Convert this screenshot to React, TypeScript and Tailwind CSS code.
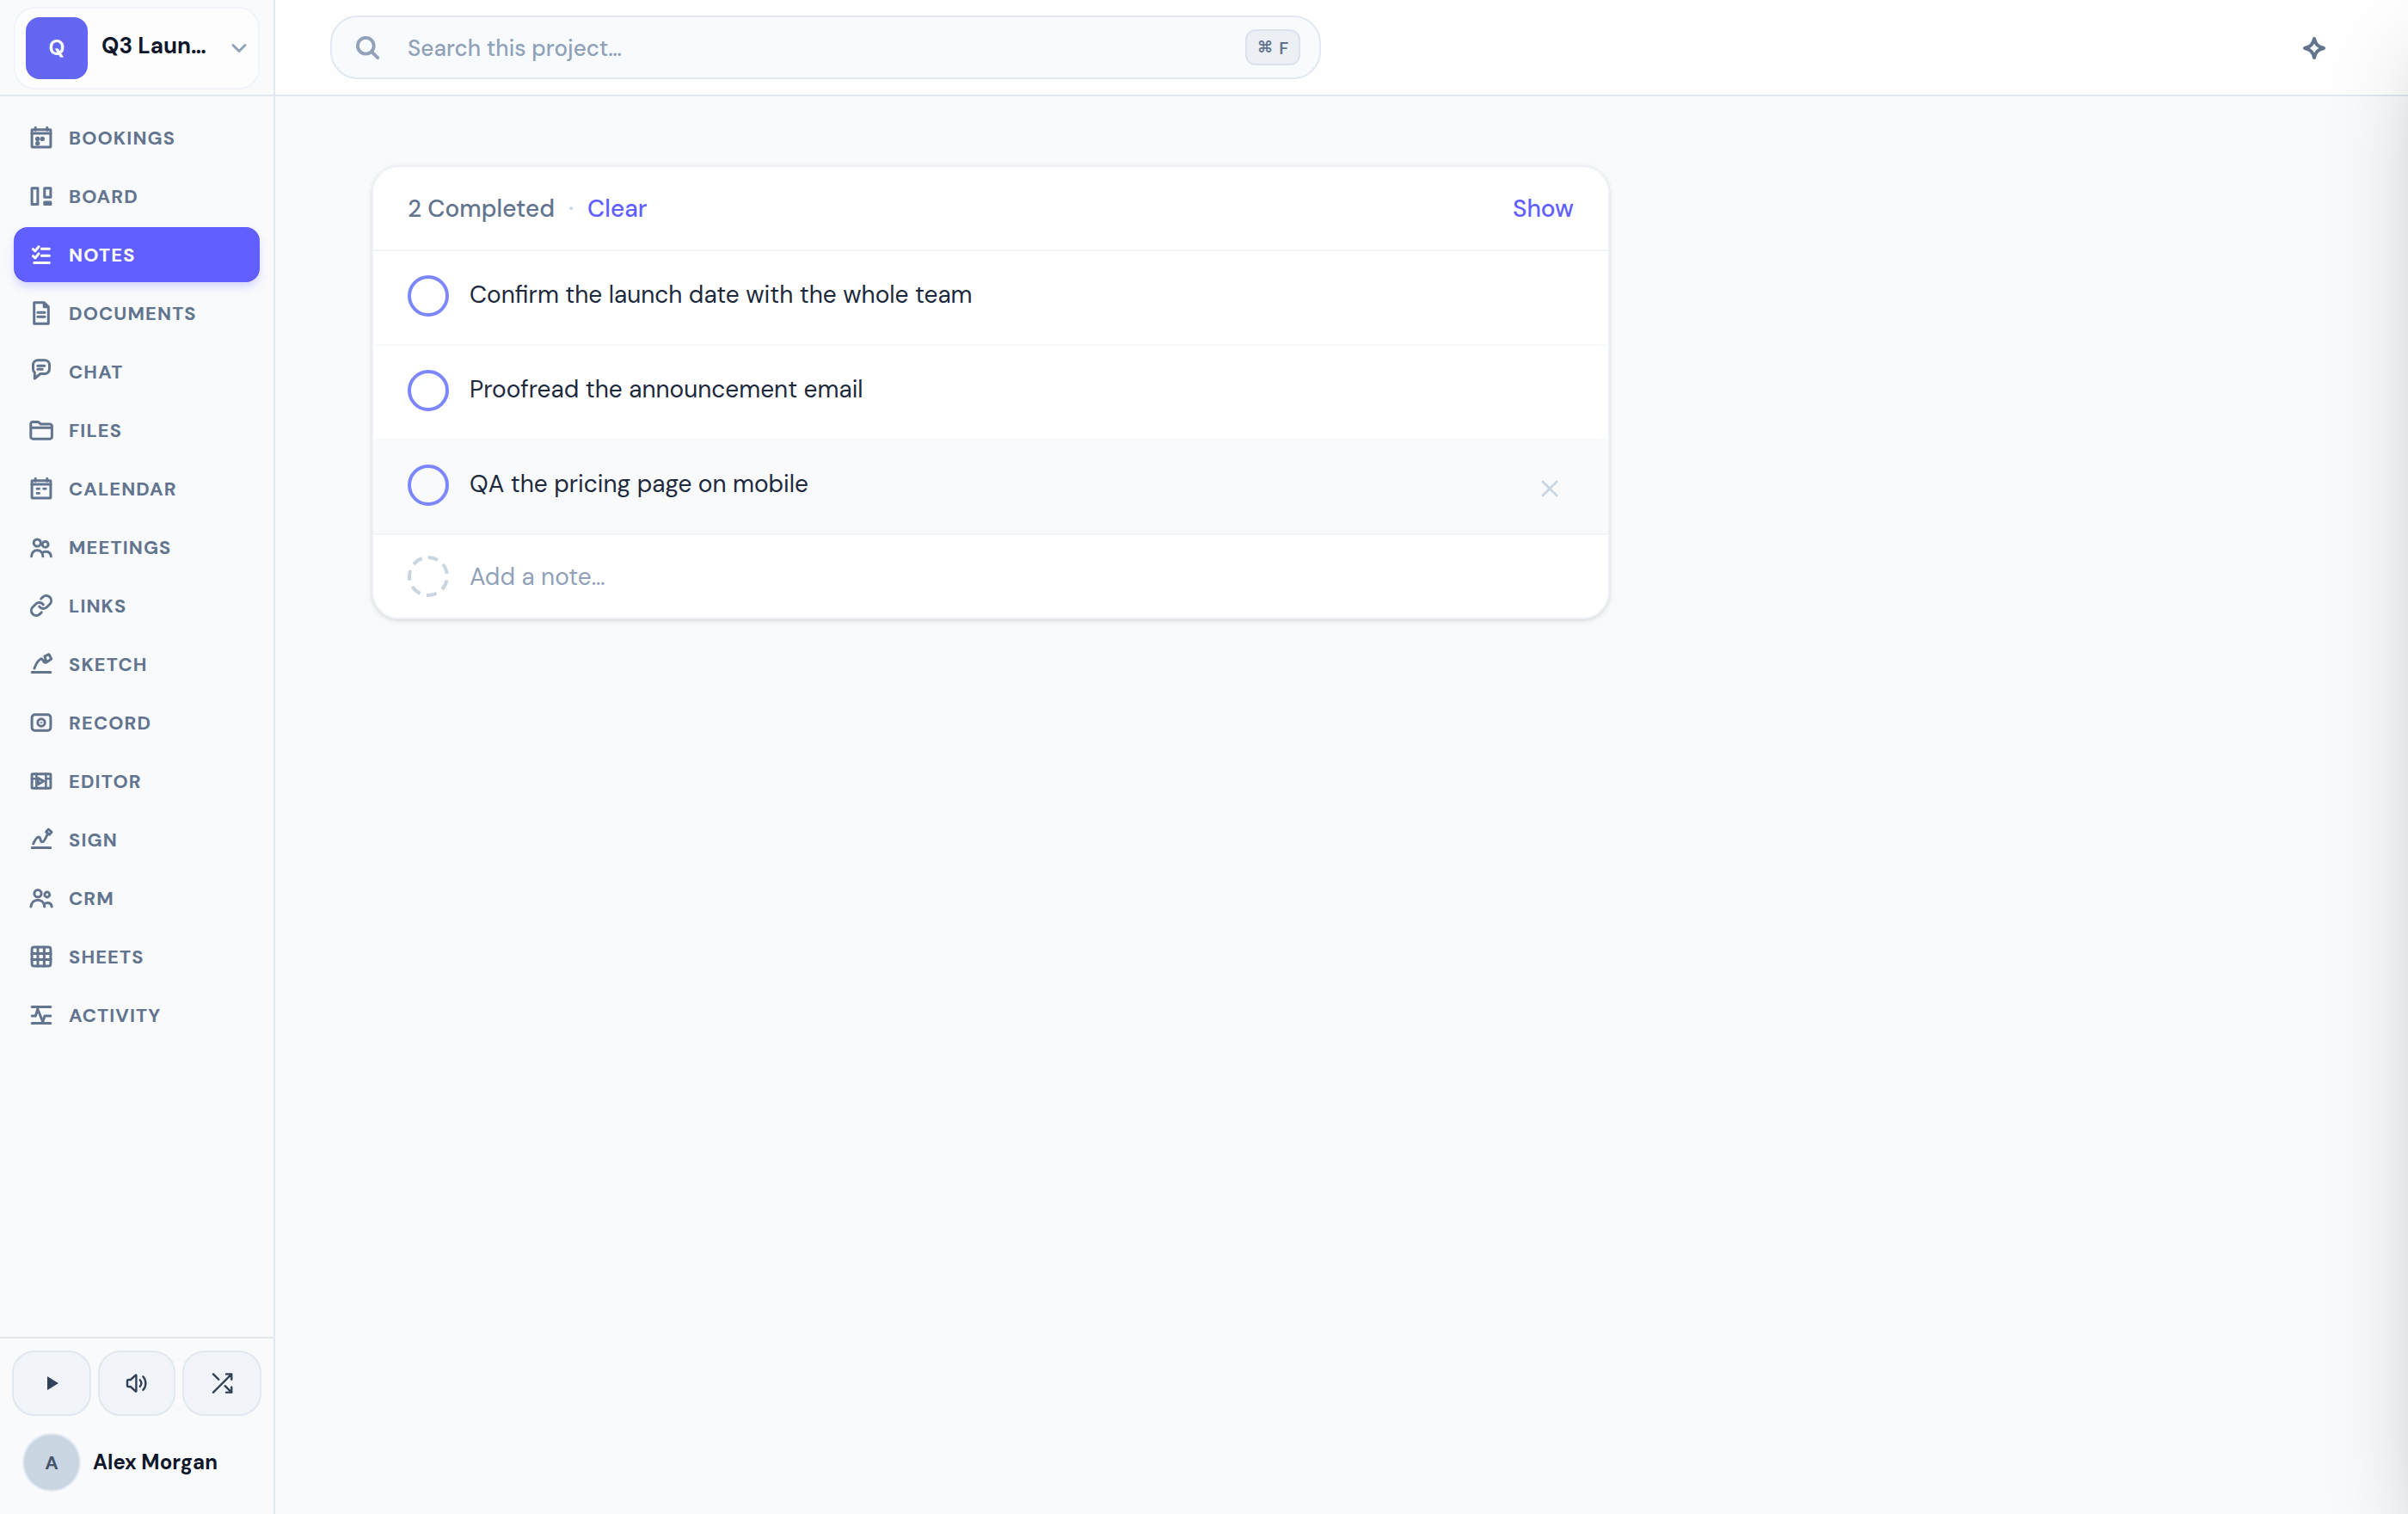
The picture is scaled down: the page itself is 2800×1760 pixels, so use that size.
import React from "react";
import { ChevronDown, Link, X } from "lucide-react";

function Glyph({ children }: { children: React.ReactNode }) {
  return (
    <svg
      className="size-7 shrink-0 overflow-visible"
      viewBox="0 0 28 28"
      fill="none"
      stroke="currentColor"
      strokeWidth="3"
      strokeLinecap="round"
      strokeLinejoin="round"
    >
      {children}
    </svg>
  );
}

const calendarFrame = (
  <>
    <rect x="3.1" y="4.7" width="21.8" height="20.4" rx="0.6" />
    <path d="M3 9h22M7.2 2.2v3M20.8 2.2v3" />
  </>
);

const items: { label: string; icon: React.ReactNode }[] = [
  {
    label: "BOOKINGS",
    icon: (
      <Glyph>
        {calendarFrame}
        <g fill="currentColor" stroke="none">
          <circle cx="9.7" cy="15.4" r="2.7" />
          <circle cx="15.3" cy="15.4" r="2.7" />
          <circle cx="9.7" cy="20.6" r="2.7" />
        </g>
      </Glyph>
    ),
  },
  {
    label: "BOARD",
    icon: (
      <Glyph>
        <rect x="3.1" y="4.7" width="6.8" height="18.8" />
        <rect x="17.8" y="4.7" width="7.1" height="10.6" />
        <rect x="17.8" y="21.1" width="7.1" height="2.4" />
      </Glyph>
    ),
  },
  {
    label: "NOTES",
    icon: (
      <Glyph>
        <path d="M14.3 7.3h9.1M14.3 15.3h9.1M5.7 23.4h17.7M4.4 7.6l2.5 2.3 4.2-5.1M4.4 15.7l2.5 2.3 4.2-5.1" />
      </Glyph>
    ),
  },
  {
    label: "DOCUMENTS",
    icon: (
      <Glyph>
        <path d="M5.7 1.8h11.8l4.8 4.8v19.6H5.7zM17.2 2v4.8h5M9.8 13.2h8.2M9.8 18.2h8.2" />
      </Glyph>
    ),
  },
  {
    label: "CHAT",
    icon: (
      <Glyph>
        <path d="M10 .7h8a5.5 5.5 0 0 1 5.5 5.5V11a5.5 5.5 0 0 1-5.5 5.5h-5L6.3 22v-7A5.5 5.5 0 0 1 4.5 11V6.2A5.5 5.5 0 0 1 10 .7zM9.8 7.3h8M9.8 11.3h5.5" />
      </Glyph>
    ),
  },
  {
    label: "FILES",
    icon: (
      <Glyph>
        <path d="M1.8 11.3V6.6a2.2 2.2 0 0 1 2.2-2.2h6.2l3.2 2.6h10.6a2.4 2.4 0 0 1 2.4 2.4v12.4a2.4 2.4 0 0 1-2.4 2.4H4.2a2.4 2.4 0 0 1-2.4-2.4zM1.8 11.3h24.6" />
      </Glyph>
    ),
  },
  {
    label: "CALENDAR",
    icon: (
      <Glyph>
        {calendarFrame}
        <path strokeWidth="2.7" d="M9 14.2h2.6M16.6 14.2h2.6M9 19.4h2.6" />
      </Glyph>
    ),
  },
  {
    label: "MEETINGS",
    icon: (
      <Glyph>
        <circle cx="9.3" cy="9" r="4.1" />
        <circle cx="18.7" cy="10.9" r="3.4" />
        <path d="M2.6 24.8c.2-4.6 3-7.1 6.7-7.1s6.5 2.6 6.6 7.1M15 21c1.3-1.4 3-2 4.8-1.8 3.3.2 5.3 2.4 5.5 5.6" />
      </Glyph>
    ),
  },
  {
    label: "LINKS",
    icon: <Link className="size-7 shrink-0" strokeWidth={2.6} />,
  },
  {
    label: "SKETCH",
    icon: (
      <Glyph>
        <path d="M3.2 23.4h21.6M6 19c1.6-4.6 4.2-9.4 7.5-11 2.6-1 2.2 3.8 5 4.3M18 4.9l5-2.2 2.7 5.3-5.8 4z" />
      </Glyph>
    ),
  },
  {
    label: "RECORD",
    icon: (
      <Glyph>
        <rect x="3.1" y="4.7" width="21.8" height="18.6" rx="3.5" />
        <circle cx="14" cy="14" r="4.2" />
        <circle cx="14" cy="14" r="1.1" fill="currentColor" stroke="none" />
      </Glyph>
    ),
  },
  {
    label: "EDITOR",
    icon: (
      <Glyph>
        <rect x="3.1" y="5.7" width="21.8" height="16.6" rx="0.5" />
        <path strokeWidth="2.6" d="M8.4 5.6v16.8M19.4 5.6v16.8M3 11.3h5.4M19.4 11.3H25" />
        <path d="M10.4 10.6v7l6.4-3.6z" />
      </Glyph>
    ),
  },
  {
    label: "SIGN",
    icon: (
      <Glyph>
        <path d="M3.2 23.4h21.6M4.7 18.8c1.6-3.6 4.2-8 6.5-7.8 2.6.4 1.2 6 4 5.8 2.2-.2 4-4.6 5.8-8.6M22.4 2.1l3.6 3.1-2.6 3-3.8-3.1z" />
      </Glyph>
    ),
  },
  {
    label: "CRM",
    icon: (
      <Glyph>
        <circle cx="10" cy="8.7" r="4.1" />
        <circle cx="20.8" cy="10" r="2.9" />
        <path d="M2 24c.4-4.8 3.6-7.8 8-7.8s7.4 3 7.8 7.8M17.6 20.8c3.4-2.6 8.2-1.4 8.6 3.2" />
      </Glyph>
    ),
  },
  {
    label: "SHEETS",
    icon: (
      <Glyph>
        <rect x="3.1" y="3.1" width="21.8" height="21.8" rx="2.4" />
        <path d="M10 3v22M17.4 3v22M3 10.4h22M3 17.6h22" />
      </Glyph>
    ),
  },
  {
    label: "ACTIVITY",
    icon: (
      <Glyph>
        <path d="M3.2 4.4h21.6M3.2 23.4h21.6M3.2 15h4.2l2.4-8 6 15 2.2-7h6.8" />
      </Glyph>
    ),
  },
];

const mediaButton =
  "flex h-[76px] items-center justify-center rounded-[26px] border-2 border-slate-200 bg-slate-100 text-slate-700";

function Sidebar() {
  return (
    <aside className="flex h-full w-80 shrink-0 flex-col border-r-2 border-slate-200 bg-slate-50">
      <div className="h-28 shrink-0 border-b-2 border-slate-200 px-4 py-2">
        <button className="flex h-24 w-full items-center rounded-3xl border-2 border-slate-100 bg-[#fdfdfe] pr-2 pl-3 text-left">
          <span className="flex size-[72px] shrink-0 items-center justify-center rounded-2xl bg-[#6366f1] text-[24px] font-bold text-white">
            Q
          </span>
          <span className="ml-4 w-[140px] pb-1.5 text-[26px] font-bold whitespace-nowrap text-slate-900">
            Q3 Laun…
          </span>
          <ChevronDown className="ml-auto size-7 shrink-0 text-slate-400" strokeWidth={2.5} />
        </button>
      </div>
      <nav className="flex flex-1 flex-col gap-1 px-4 pt-4">
        {items.map((item) => (
          <a
            key={item.label}
            className={
              item.label === "NOTES"
                ? "flex h-16 items-center gap-[18px] rounded-2xl bg-[#615fff] px-[18px] text-white shadow-[0_6px_12px_-2px_rgba(97,95,255,0.28)]"
                : "flex h-16 items-center gap-[18px] rounded-2xl px-[18px] text-slate-500"
            }
          >
            {item.icon}
            <span className="pt-px text-[22px] font-bold tracking-[1.1px]">{item.label}</span>
          </a>
        ))}
      </nav>
      <div className="flex h-[206px] shrink-0 flex-col border-t-2 border-slate-200 px-3.5 pt-3.5">
        <div className="grid grid-cols-[92px_90px_92px] gap-2">
          <button className={mediaButton}>
            <svg className="ml-0.5 h-4 w-[13px]" viewBox="0 0 13 16" fill="currentColor">
              <path d="M0 0l13 8-13 8z" />
            </svg>
          </button>
          <button className={mediaButton}>
            <svg
              className="size-7"
              viewBox="0 0 28 28"
              fill="none"
              stroke="currentColor"
              strokeWidth="2.4"
              strokeLinecap="round"
              strokeLinejoin="round"
            >
              <path d="M13.4 4.8v18.4a.4.4 0 0 1-.7.2L6.8 18H4.2A1.2 1.2 0 0 1 3 16.8v-5.6A1.2 1.2 0 0 1 4.2 10h2.6l5.9-5.4a.4.4 0 0 1 .7.2zM17.8 10.2c1.8 2.2 1.8 5.4 0 7.6M21.4 6.2c4 4.4 4 11.2 0 15.6" />
            </svg>
          </button>
          <button className={mediaButton}>
            <svg
              className="size-[30px]"
              viewBox="0 0 24 24"
              fill="none"
              stroke="currentColor"
              strokeWidth="1.9"
              strokeLinecap="round"
              strokeLinejoin="round"
            >
              <path d="M16 3.5h5v5M4 20.5l17-17M21 15.5v5h-5M15 14.5l6 6M4 3.5l5 5" />
            </svg>
          </button>
        </div>
        <div className="mt-5 flex items-center gap-3.5 pl-3">
          <span className="flex size-[68px] items-center justify-center rounded-full border-2 border-slate-200 bg-slate-300 text-[22px] font-bold text-slate-600">
            A
          </span>
          <span className="text-[24px] font-bold whitespace-nowrap text-slate-900">Alex Morgan</span>
        </div>
      </div>
    </aside>
  );
}

function TopBar() {
  return (
    <header className="flex h-28 shrink-0 items-center justify-between border-b-2 border-slate-200 bg-[#fefefe] pr-[92px] pl-16">
      <div className="flex h-[74px] w-[1152px] items-center rounded-[32px] border-2 border-slate-200 bg-[#f8fbfd] pr-[22px] pl-[26px]">
        <svg
          className="size-8 shrink-0 text-slate-400"
          viewBox="0 0 32 32"
          fill="none"
          stroke="currentColor"
          strokeWidth="3.8"
          strokeLinecap="round"
        >
          <circle cx="13.3" cy="14.3" r="9.4" />
          <path d="M20.3 21.3l6.9 6.9" />
        </svg>
        <span className="ml-[30px] flex-1 pt-0.5 text-[26px] font-medium tracking-[0.05px] text-slate-400">
          Search this project…
        </span>
        <kbd className="flex h-[42px] w-16 items-center justify-center gap-[7px] rounded-xl border-2 border-[#dce3ec] bg-[#eceff4] pt-px font-['DM_Sans','Inter',sans-serif] text-[20px] font-semibold text-slate-500">
          <span className="text-[19px]">⌘</span>
          <span>F</span>
        </kbd>
      </div>
      <svg
        className="mt-0.5 size-[34px] text-slate-500"
        viewBox="0 0 34 34"
        fill="none"
        stroke="currentColor"
        strokeWidth="4"
        strokeLinejoin="round"
      >
        <path d="M17 6c1.6 6.8 4.2 9.4 11 11-6.8 1.6-9.4 4.2-11 11-1.6-6.8-4.2-9.4-11-11 6.8-1.6 9.4-4.2 11-11z" />
      </svg>
    </header>
  );
}

const notes = [
  { text: "Confirm the launch date with the whole team", hovered: false },
  { text: "Proofread the announcement email", hovered: false },
  { text: "QA the pricing page on mobile", hovered: true },
];

function NotesCard() {
  return (
    <section className="w-[1440px] overflow-hidden rounded-[32px] border-2 border-[#edf1f6] bg-white text-[28px] shadow-[0_2px_6px_rgba(0,0,0,0.10),0_2px_4px_-2px_rgba(0,0,0,0.10)]">
      <div className="flex h-[98px] items-center border-b-2 border-slate-100 px-10 pt-px font-medium">
        <span className="text-slate-500">2 Completed</span>
        <span className="mx-4 text-slate-300">·</span>
        <span className="flex-1 text-[#615fff]">Clear</span>
        <span className="text-[#615fff]">Show</span>
      </div>
      {notes.map((note) => (
        <div
          key={note.text}
          className={
            note.hovered
              ? "flex h-[108px] items-start bg-slate-50 px-10 pt-7"
              : "flex h-[110px] items-start border-b-2 border-slate-50 px-10 pt-7"
          }
        >
          <span className="size-12 shrink-0 rounded-full border-4 border-[#7c86ff]" />
          <span className="ml-6 flex-1 leading-[46px] text-slate-800">{note.text}</span>
          {note.hovered && (
            <X className="mt-3 mr-3 size-8 shrink-0 text-slate-300" strokeWidth={2} />
          )}
        </div>
      ))}
      <div className="flex h-[98px] items-center border-t-2 border-slate-100 px-10">
        <svg className="size-12 shrink-0 -rotate-90 text-slate-300" viewBox="0 0 48 48" fill="none">
          <circle
            cx="24"
            cy="24"
            r="22"
            stroke="currentColor"
            strokeWidth="4"
            strokeDasharray="12 7.747"
            strokeDashoffset="0.5"
          />
        </svg>
        <span className="ml-6 pt-px text-slate-400">Add a note…</span>
      </div>
    </section>
  );
}

export default function App() {
  return (
    <div className="relative flex h-[1760px] w-[2800px] overflow-hidden bg-slate-50 font-['DM_Sans','Inter',sans-serif]">
      <Sidebar />
      <div className="flex min-w-0 flex-1 flex-col">
        <TopBar />
        <main className="flex-1 px-28 pt-20">
          <NotesCard />
        </main>
      </div>
      <div className="pointer-events-none absolute top-0 left-full h-full w-[800px] shadow-[0_50px_100px_-24px_rgba(0,0,0,0.25)]" />
    </div>
  );
}
